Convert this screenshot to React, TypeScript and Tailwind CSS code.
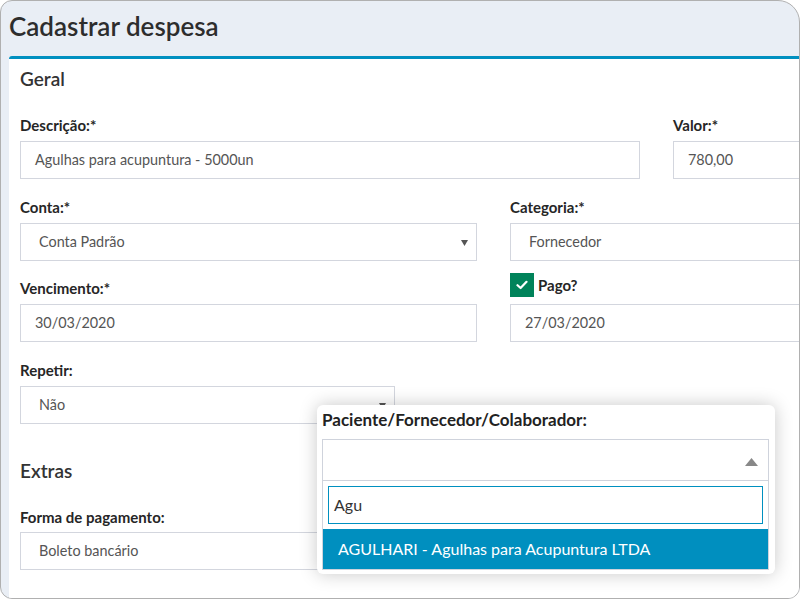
import React from "react";

const Label = ({ children }: { children: React.ReactNode }) => (
  <div className="h-[20px] leading-[20px] text-[15px] font-bold text-[#262626]">{children}</div>
);

const Input = ({ value, select, pl = "pl-[14px]" }: { value: string; select?: boolean; pl?: string }) => (
  <div className={`relative mt-[6px] h-[38px] border border-[#d3d6de] bg-white flex items-center ${pl} text-[14.4px] text-[#555]`}>
    <span>{value}</span>
    {select && (
      <svg className="absolute right-[8px] top-[16px]" width="7" height="6" viewBox="0 0 7 6">
        <path d="M0 0 L7 0 L3.5 6 Z" fill="#555" />
      </svg>
    )}
  </div>
);

export default function App() {
  return (
    <div
      className="w-[800px] h-[600px] bg-white overflow-hidden relative"
      style={{ fontFamily: "Lato, 'Liberation Sans', sans-serif" }}
    >
      <div className="w-[800px] h-[599px] border border-[#b0b0b0] rounded-tl-[12px] rounded-tr-[22px] rounded-bl-[12px] rounded-br-[12px] bg-[#e9eef5] overflow-hidden flex flex-col">
        <div className="h-[55px] shrink-0 pl-[8px] flex items-center">
          <h1 className="text-[26px] font-semibold text-[#2d2d2d] leading-none -mt-[6px]">Cadastrar despesa</h1>
        </div>
        <div className="ml-[8px] w-[1000px] flex-1 bg-white border-t-[3px] border-[#0090c0] rounded-tl-[3px] pl-[11px] pt-[8px]">
          <div className="h-[24px] leading-[24px] text-[19px] font-semibold text-[#333]">Geral</div>
          <div className="mt-[24px] flex gap-[33px]">
            <div className="w-[620px]">
              <Label>Descrição:*</Label>
              <Input value="Agulhas para acupuntura - 5000un" />
            </div>
            <div className="w-[294px]">
              <Label>Valor:*</Label>
              <Input value="780,00" />
            </div>
          </div>
          <div className="mt-[18px] flex gap-[33px]">
            <div className="w-[457px]">
              <Label>Conta:*</Label>
              <Input value="Conta Padrão" select pl="pl-[18px]" />
            </div>
            <div className="w-[457px]">
              <Label>Categoria:*</Label>
              <Input value="Fornecedor" pl="pl-[18px]" />
            </div>
          </div>
          <div className="mt-[17px] flex gap-[33px]">
            <div className="w-[457px]">
              <Label>Vencimento:*</Label>
              <Input value="30/03/2020" />
            </div>
            <div className="w-[457px]">
              <div className="h-[20px] flex items-center gap-[4px] relative -top-[3px]">
                <div className="w-[24px] h-[24px] shrink-0 bg-[#00835a] flex items-center justify-center">
                  <svg width="12" height="10" viewBox="0 0 12 10">
                    <path d="M1.5 5.2 L4.6 8 L10.5 1.8" stroke="#fff" strokeWidth="2.2" fill="none" strokeLinecap="round" strokeLinejoin="round" />
                  </svg>
                </div>
                <span className="text-[15px] font-bold text-[#262626]">Pago?</span>
              </div>
              <Input value="27/03/2020" />
            </div>
          </div>
          <div className="mt-[18px] flex">
            <div className="w-[375px]">
              <Label>Repetir:</Label>
              <Input value="Não" select pl="pl-[18px]" />
            </div>
          </div>
          <div className="mt-[35px] h-[24px] leading-[24px] text-[19px] font-semibold text-[#333]">Extras</div>
          <div className="mt-[24px] w-[620px]">
            <div className="h-[20px] leading-[20px] text-[15px] font-bold text-[#262626]">Forma de pagamento:</div>
            <div className="mt-[5px] h-[38px] border border-[#d3d6de] bg-white flex items-center pl-[18px] text-[14.4px] text-[#555]">
              Boleto bancário
            </div>
          </div>
        </div>
      </div>

      <div className="absolute left-[317px] top-[405px] w-[458px] h-[169px] bg-white rounded-[6px] shadow-[0_0_18px_rgba(0,0,0,0.22)] pl-[5px] pr-[6px] pt-[4px]">
        <div className="h-[22px] leading-[22px] text-[17px] font-bold text-[#222]">Paciente/Fornecedor/Colaborador:</div>
        <div className="mt-[8px] relative h-[42px] border border-[#cfd3dc] bg-white">
          <svg className="absolute right-[10px] top-[18px]" width="13" height="8" viewBox="0 0 13 8">
            <path d="M0 8 L13 8 L6.5 0 Z" fill="#888" />
          </svg>
        </div>
        <div className="border-x border-b border-[#cfd3dc]">
          <div className="px-[5px] pt-[5px] pb-[5px]">
            <div className="h-[38px] border border-[#0090c0] flex items-center pl-[5px] text-[16px] text-[#333]">Agu</div>
          </div>
          <div className="h-[40px] bg-[#008fbf] flex items-center pl-[15px] text-[16px] text-white">
            AGULHARI - Agulhas para Acupuntura LTDA
          </div>
        </div>
      </div>
    </div>
  );
}
